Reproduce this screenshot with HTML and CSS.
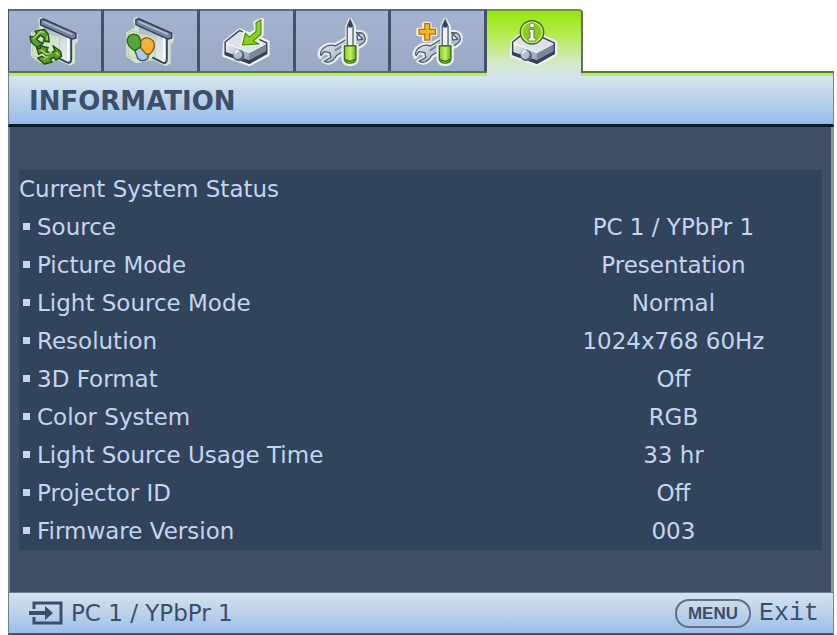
FILE: index.html
```html
<!DOCTYPE html>
<html lang="en">
<head>
  <meta charset="UTF-8">
  <meta name="viewport" content="width=device-width, initial-scale=1.0">
  <title>Projector Menu - Information</title>
  <link rel="stylesheet" href="styles.css">
</head>
<body>
  <!-- shapes shared by the tab icons -->
  <svg class="defs" aria-hidden="true">
    <defs>
      <linearGradient id="metal" x1="0" y1="0" x2="1" y2="1">
        <stop offset="0" stop-color="#f4f7fb"/>
        <stop offset="1" stop-color="#8b98ac"/>
      </linearGradient>
      <linearGradient id="handle" x1="0" y1="0" x2="1" y2="0">
        <stop offset="0" stop-color="#7cc41f"/>
        <stop offset="0.5" stop-color="#c6f26a"/>
        <stop offset="1" stop-color="#66ab18"/>
      </linearGradient>
      <linearGradient id="sheet" x1="0" y1="0" x2="0" y2="1">
        <stop offset="0" stop-color="#9ba8b7"/>
        <stop offset="0.4" stop-color="#d3dfe2"/>
        <stop offset="1" stop-color="#e4f0ea"/>
      </linearGradient>
      <symbol id="screen" viewBox="0 0 96 62">
        <path d="M30 9l3-3 39 18v8l-3 2v20l-5 3-13-6-18 3-10-7V22l9-5z" fill="#dcebd0" opacity=".85"/>
        <path d="M36 15l29 13v23l-3 3-12-6-14-6z" fill="url(#sheet)"/>
        <path d="M25 20l28 6v26l-28-5z" fill="#cfe6c0" stroke="#9cc78e" opacity=".6"/>
        <path d="M65 28v22c0 3-2 5-5 3l-10-5" fill="none" stroke="#39455c" stroke-width="2"/>
        <path d="M62 28v20c0 2 0 3-2 3" fill="none" stroke="#fff" stroke-width="2"/>
        <path d="M33 9l3-1 34 15v5l-4 1-33-15z" fill="#77859d" stroke="#2f3d56" stroke-width="1.5" stroke-linejoin="round"/>
        <path d="M36 11l30 13" stroke="#b4c0d2" stroke-width="1.5"/>
      </symbol>
      <symbol id="projector" viewBox="0 0 96 62">
        <path d="M26 32l15-12 29 12v13L51 55 25 46z" fill="none" stroke="#edf2f5" stroke-width="4" stroke-linejoin="round"/>
        <path d="M26 32l15-12 28 13-18 10z" fill="#dde3ec"/>
        <path d="M26 32l25 11v11l-25-9z" fill="url(#metal)"/>
        <path d="M51 43l18-10v11L51 54z" fill="#7a879d"/>
        <path d="M51 54l18-10v-3L51 51l-25-9v3z" fill="#334158"/>
        <path d="M26 32l15-12 28 13v11L51 54l-25-9z" fill="none" stroke="#35425a" stroke-width="1.5" stroke-linejoin="round"/>
        <path d="M27 33l24 10 17-9" fill="none" stroke="#fff" stroke-width="1"/>
        <circle cx="40" cy="46" r="6" fill="#56647c"/>
        <circle cx="39" cy="45" r="4.5" fill="#b4c0d0"/>
        <path d="M36 44q1-3 4-3" fill="none" stroke="#fff" stroke-width="1.5"/>
      </symbol>
      <symbol id="tools" viewBox="0 0 96 62">
        <g fill="url(#metal)" stroke-linejoin="round">
          <path d="M62 22q7-2 10 3 2 6-3 10-5 4-12 3L43 47q-3 6-10 7l-5-2 7-4-1-4-5-1-4 5q-3-5 2-10 6-5 13-3l14-8q2-5 8-6l4 2-3 3 1 3 4-1z" stroke="#e6edf1" stroke-width="3.5"/>
          <path d="M63 23q6-2 8 3 2 5-3 8-5 4-11 3L42 46q-3 6-9 7l-4-1 7-4-1-5-6-1-3 4q-2-4 3-8 5-4 12-2l15-9q2-4 7-5l3 1-3 3 1 4 5-1z" stroke="#4a5870" stroke-width="1.3"/>
        </g>
        <path d="M40 41l13-8" stroke="#7d8aa0" stroke-width="2"/>
        <path d="M56 9l4 7v20h3v14q-1 5-7 5t-7-5V36h4V16z" fill="none" stroke="#e9f0ec" stroke-width="4" stroke-linejoin="round"/>
        <path d="M56 9l3 7v20h-6V16z" fill="#eef2f6" stroke="#44526a" stroke-width="1.3"/>
        <path d="M56 10l2 4v3h-4v-3z" fill="#35435a"/>
        <path d="M50 36h12v14q-1 4-6 4t-6-4z" fill="url(#handle)" stroke="#39630f" stroke-width="1.3"/>
        <path d="M51 50q5 4 10 0" fill="none" stroke="#3f7510" stroke-width="1.5"/>
      </symbol>
    </defs>
  </svg>

  <main class="osd">
    <nav class="tabs" role="tablist" aria-label="Menu">
      <button class="tab" role="tab" aria-selected="false" aria-label="Display">
        <svg viewBox="0 0 96 62">
          <use href="#screen"/>
          <g fill="#5b9e2a" stroke="#244f14" stroke-width="1.5" stroke-linejoin="round">
            <path d="M30 20l7-1 4 5 1 8-6-1 1-3-4-3-4 4 3 3 4 1-6 5-7-6-1-6 4 1 3-4-2-2z"/>
            <path d="M33 36l8 2-2 3 4 3 5-3-2-5 8 6 1 5-6 4-2-3-4 2 2 3-8 2-7-6 4-2 4 2 2-2-5-4-4 2-2-7 4 1z"/>
          </g>
          <path d="M25 29l5-5 3-3 4 1M40 26v4M33 40l6 5 6-2M36 50l5-3M49 43l3 3" fill="none" stroke="#a8db62" stroke-width="1.5"/>
        </svg>
      </button>
      <button class="tab" role="tab" aria-selected="false" aria-label="Picture">
        <svg viewBox="0 0 96 62">
          <use href="#screen"/>
          <path d="M38 36l9 7-2 6q-5 5-10 0l-3-8z" fill="#a9c9ee" stroke="#41577c" stroke-width="1.5" stroke-linejoin="round"/>
          <path d="M37 37l1-6q6-7 13 0 3 7-3 13l-4 1z" fill="#f3b13c" stroke="#946014" stroke-width="1.5" stroke-linejoin="round"/>
          <path d="M38 37l-6 4q-8-4-8-11 2-7 8-6 7 1 6 13z" fill="#57a536" stroke="#2b6a22" stroke-width="1.5" stroke-linejoin="round"/>
        </svg>
      </button>
      <button class="tab" role="tab" aria-selected="false" aria-label="Source">
        <svg viewBox="0 0 96 62">
          <use href="#projector"/>
          <path d="M57 12l7-3v15l-7 7 5 3-19 1 3-13 4 4 8-6z" fill="#8dd11f" stroke="#e9f3dc" stroke-width="4" stroke-linejoin="round"/>
          <path d="M58 12l5-3v15l-8 7 6 3-17 1 3-12 4 4 7-6z" fill="#8dd11f" stroke="#4c8c16" stroke-width="1.2" stroke-linejoin="round"/>
        </svg>
      </button>
      <button class="tab" role="tab" aria-selected="false" aria-label="System Setup: Basic">
        <svg viewBox="0 0 96 62"><use href="#tools"/></svg>
      </button>
      <button class="tab" role="tab" aria-selected="false" aria-label="System Setup: Advanced">
        <svg viewBox="0 0 96 62">
          <use href="#tools"/>
          <path d="M34 13h6v6h6v5h-6v6h-6v-6h-6v-5h6z" fill="#f5b52b" stroke="#f3ead0" stroke-width="4" stroke-linejoin="round"/>
          <path d="M35 13h5v6h6v5h-6v6h-5v-6h-6v-5h6z" fill="#f5b52b" stroke="#a9731a" stroke-width="1.3"/>
        </svg>
      </button>
      <button class="tab active" role="tab" aria-selected="true" aria-label="Information">
        <svg viewBox="0 0 96 62">
          <use href="#projector"/>
          <circle cx="46" cy="22" r="12" fill="#8bcb22" stroke="#3e6420" stroke-width="1.5"/>
          <circle cx="46" cy="22" r="10.5" fill="none" stroke="#c4ef74" stroke-width="1.5"/>
          <circle cx="46" cy="15" r="2.5" fill="#fff" stroke="#477221" stroke-width=".8"/>
          <path d="M43 19h5v9h2v3h-8v-3h2v-6h-1z" fill="#fff" stroke="#477221" stroke-width=".8"/>
        </svg>
      </button>
    </nav>

    <h1 class="title">INFORMATION</h1>

    <section class="content">
      <table class="status">
        <caption>Current System Status</caption>
        <tbody>
          <tr><th scope="row">Source</th><td>PC 1 / YPbPr 1</td></tr>
          <tr><th scope="row">Picture Mode</th><td>Presentation</td></tr>
          <tr><th scope="row">Light Source Mode</th><td>Normal</td></tr>
          <tr><th scope="row">Resolution</th><td>1024x768 60Hz</td></tr>
          <tr><th scope="row">3D Format</th><td>Off</td></tr>
          <tr><th scope="row">Color System</th><td>RGB</td></tr>
          <tr><th scope="row">Light Source Usage Time</th><td>33 hr</td></tr>
          <tr><th scope="row">Projector ID</th><td>Off</td></tr>
          <tr><th scope="row">Firmware Version</th><td>003</td></tr>
        </tbody>
      </table>
    </section>

    <footer class="footer">
      <div class="input">
        <svg class="input-icon" viewBox="0 0 34 24" aria-hidden="true">
          <path d="M5 8V2h27v20H5v-6" fill="none" stroke="#3b4e6b" stroke-width="3"/>
          <path d="M0 12h20" stroke="#3b4e6b" stroke-width="4"/>
          <path d="M16 5l8 7-8 7z" fill="#3b4e6b"/>
        </svg>
        <span>PC 1 / YPbPr 1</span>
      </div>
      <button class="exit"><span class="key">MENU</span><span class="action">Exit</span></button>
    </footer>
  </main>
</body>
</html>
```

FILE: styles.css
```css
* {
  box-sizing: border-box;
}

body {
  margin: 0;
  padding: 9px 3px 0 8px;
  background: #fff;
  font-family: "DejaVu Sans", Verdana, sans-serif;
  font-size: 23px;
  color: #3b4e6b;
}

button {
  padding: 0;
  border: none;
  background: none;
  font: inherit;
  color: inherit;
  cursor: pointer;
}

.defs {
  display: block;
  width: 0;
  height: 0;
}

/* tabs */
.tabs {
  display: grid;
  grid-template-columns: repeat(6, 1fr);
  max-width: 575px;
}

.tab {
  height: 62px;
  border-top: 2px solid #5a6980;
  border-right: 3px solid #43526b;
  background: linear-gradient(#a4b4d0, #9aaac6);
}

.tab:first-child {
  border-left: 1px solid #43526b;
}

.tab svg {
  display: block;
  width: 100%;
  height: 60px;
}

.tab.active {
  border-top: 2px solid #6f9830;
  border-right: 2px solid #66705e;
  border-top-right-radius: 4px;
  background: linear-gradient(#96e60c, #b3ec50 40%, #d3e9c4 85%, #d6e6e0);
  position: relative;
}

/* covers the green line under the open tab */
.tab.active::after {
  content: "";
  position: absolute;
  left: 0;
  right: 0;
  top: 100%;
  height: 5px;
  background: #d5e5e8;
}

/* title bar */
.title {
  margin: 0;
  padding: 6px 0 0 20px;
  border: 1px solid #6f8199;
  border-top: 2px solid #567a35;
  border-bottom: 3px solid #0b1d2b;
  background: linear-gradient(#b4ee62 3px, #d6e6ee 3px, #bcd2ea 50%, #98bbea);
  font-size: 26px;
  line-height: 45px;
}

/* status list */
.content {
  padding: 43px 9px 42px;
  border-left: 2px solid #76869a;
  border-right: 3px solid #8995a3;
  background: #3f4f66;
  color: #c4d5f0;
}

.status {
  width: 100%;
  border-collapse: collapse;
  background: #32435c;
}

.status caption {
  height: 38px;
  background: #32435c;
  line-height: 38px;
  text-align: left;
}

.status th,
.status td {
  height: 38px;
  padding: 0;
  font-weight: normal;
}

.status th {
  text-align: left;
}

.status th::before {
  content: "";
  display: inline-block;
  width: 7px;
  height: 7px;
  margin: 0 7px 5px 4px;
  background: #c4d5f0;
}

.status td {
  width: 37%;
  text-align: center;
}

/* footer */
.footer {
  display: flex;
  justify-content: space-between;
  align-items: center;
  height: 43px;
  padding: 0 14px 0 20px;
  border: 1px solid #6f8199;
  border-bottom: 2px solid #43526b;
  background: linear-gradient(#d3e3ef, #bcd2ea 50%, #9cbdec);
}

.input {
  display: flex;
  align-items: center;
  gap: 8px;
}

.input-icon {
  width: 34px;
  height: 24px;
}

.exit {
  display: flex;
  align-items: center;
  gap: 8px;
}

.key {
  padding: 0 11px;
  border: 2px solid #5f7288;
  border-radius: 14px;
  font-family: "Liberation Sans", Arial, sans-serif;
  font-size: 17px;
  font-weight: bold;
  line-height: 25px;
}

.action {
  font-family: "Liberation Mono", monospace;
  font-size: 25px;
}
```
